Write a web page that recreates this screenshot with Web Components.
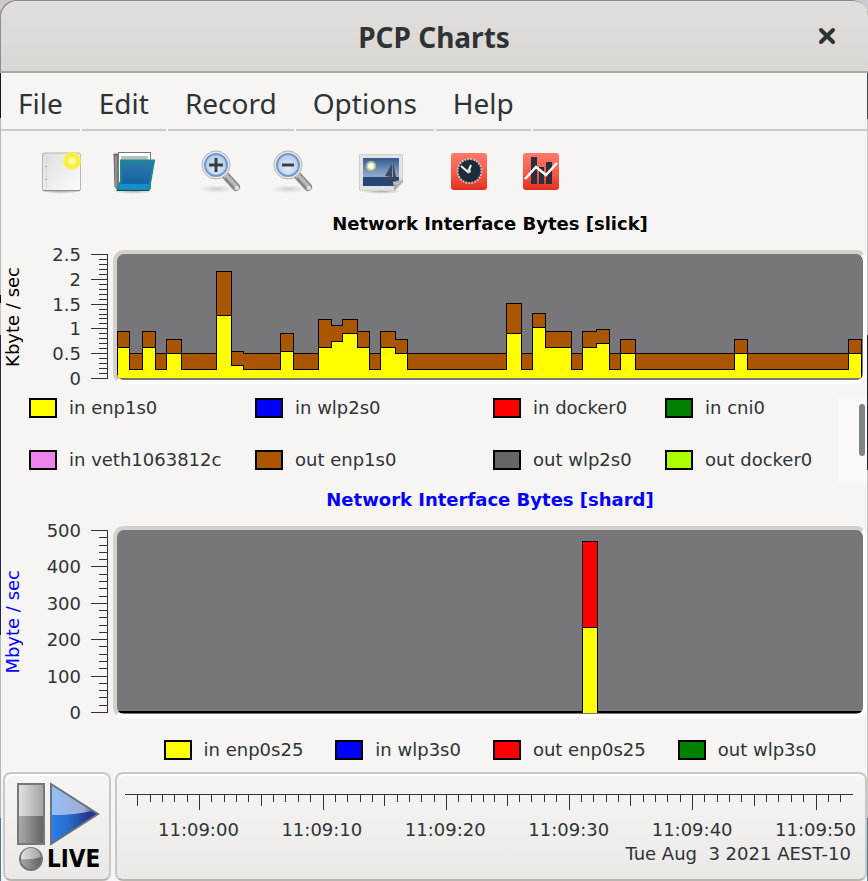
<!DOCTYPE html>
<html lang="en">
<head>
<meta charset="utf-8">
<title>PCP Charts</title>
<style>
  body {
    margin: 0;
    background: #f6f5f4;
    color: #2e3436;
    font: 18px/20px "DejaVu Sans", sans-serif;
  }
</style>
</head>
<body>
<pcp-window>
  <pcp-titlebar>PCP Charts</pcp-titlebar>
  <pcp-menubar items="File,Edit,Record,Options,Help"></pcp-menubar>
  <pcp-toolbar></pcp-toolbar>
  <pcp-chart id="slick" heading="Network Interface Bytes [slick]" unit="Kbyte / sec" labels="2.5,2,1.5,1,0.5,0">
    <pcp-legend slot="legend" scroll>
      <pcp-key color="#ffff00">in enp1s0</pcp-key>
      <pcp-key color="#0000ff">in wlp2s0</pcp-key>
      <pcp-key color="#ff0000">in docker0</pcp-key>
      <pcp-key color="#008000">in cni0</pcp-key>
      <pcp-key color="#ee82ee">in veth1063812c</pcp-key>
      <pcp-key color="#aa5500">out enp1s0</pcp-key>
      <pcp-key color="#666666">out wlp2s0</pcp-key>
      <pcp-key color="#aaff00">out docker0</pcp-key>
    </pcp-legend>
  </pcp-chart>
  <pcp-chart id="shard" active heading="Network Interface Bytes [shard]" unit="Mbyte / sec" labels="500,400,300,200,100,0">
    <pcp-legend slot="legend">
      <pcp-key color="#ffff00">in enp0s25</pcp-key>
      <pcp-key color="#0000ff">in wlp3s0</pcp-key>
      <pcp-key color="#ff0000">out enp0s25</pcp-key>
      <pcp-key color="#008000">out wlp3s0</pcp-key>
    </pcp-legend>
  </pcp-chart>
  <pcp-timebar></pcp-timebar>
</pcp-window>

<script>
// Window frame: slivers of the desktop show down both sides
class PcpWindow extends HTMLElement {
  constructor() {
    super();
    this.attachShadow({ mode: 'open' }).innerHTML = `
      <style>
        :host {
          display: block;
          box-sizing: border-box;
          min-height: 100vh;
          padding: 0 1px;
          background:
            linear-gradient(#15181a 118px, #b8b8b8 118px 295px, #000 295px 303px, #c4c4c4 303px 335px, #1f2b3d 335px 635px, #b5b5b5 635px 818px, #447aa8 818px) left / 1px 100% no-repeat,
            linear-gradient(#3d4c59 119px, #c4c4c4 119px 335px, #1f2937 335px 470px, #c4c4c4 470px 818px, #4f7d9c 818px) right / 1px 100% no-repeat,
            #f6f5f4;
        }
      </style>
      <slot></slot>`;
  }
}

class PcpTitlebar extends HTMLElement {
  constructor() {
    super();
    this.attachShadow({ mode: 'open' }).innerHTML = `
      <style>
        :host {
          display: grid;
          grid-template-columns: 1fr auto 1fr;
          align-items: center;
          height: 71px;
          margin: 0 -1px;
          border-bottom: 2px solid #aaa6a1;
          border-radius: 16px 16px 0 0;
          box-shadow: inset 1px 1px #8d8c8a, 0 -16px 0 16px #c9ccce;
          background: linear-gradient(#e2dedb, #dad6d2);
          font: bold 28px/36px "Noto Sans", sans-serif;
        }
        h1 { grid-column: 2; margin: 3px 0 0; font: inherit; }
        button {
          justify-self: end;
          width: 32px;
          height: 32px;
          margin-right: 25px;
          padding: 0;
          border: 0;
          background: none;
        }
        svg { display: block; margin: auto; }
      </style>
      <h1><slot></slot></h1>
      <button type="button" aria-label="Close">
        <svg width="18" height="18"><path d="M3 3l12 12M15 3L3 15" stroke="#2e3436" stroke-width="4" stroke-linecap="round"/></svg>
      </button>`;
  }
}

class PcpMenubar extends HTMLElement {
  connectedCallback() {
    const items = this.getAttribute('items').split(',');
    this.attachShadow({ mode: 'open' }).innerHTML = `
      <style>
        :host { display: block; }
        nav { display: flex; gap: 2px; height: 58px; }
        button, i { box-sizing: border-box; border: 0; border-bottom: 2px solid #cccac8; }
        button {
          padding: 4px 17px 0;
          background: none;
          color: inherit;
          font: 28px/36px "Noto Sans", sans-serif;
        }
        i { flex: 1; }
      </style>
      <nav>${items.map((t) => `<button type="button">${t}</button>`).join('')}<i></i></nav>`;
  }
}

const lens = (sign) => `
  <ellipse cx="20" cy="41" rx="18" ry="4" fill="url(#shade)" opacity=".5"/>
  <path d="M29 28l10 11" stroke="#8a8a88" stroke-width="8" stroke-linecap="round"/>
  <path d="M29 28l10 11" stroke="#b9b9b7" stroke-width="5" stroke-linecap="round"/>
  <path d="M28 30l9 10" stroke="#858583" stroke-width="2"/>
  <circle cx="40" cy="40" r="2" fill="#e8e8e6"/>
  <circle cx="19" cy="17" r="14" fill="#e9e9e6" stroke="#b2b4b0" stroke-width="1"/>
  <circle cx="19" cy="17" r="11" fill="url(#glass)" stroke="#7398cc" stroke-width="2"/>
  <path d="${sign}" stroke="#3c3f42" stroke-width="3"/>`;

const ICONS = {
  'New chart': `
    <ellipse cx="24" cy="43" rx="18" ry="3" fill="url(#shade)"/>
    <rect x="5.500" y="5" width="38" height="38" rx="2" fill="url(#paper)" stroke="#b5b5b3"/>
    <path d="M6 42.500h37" stroke="#8f8f8d"/>
    <path d="M9.500 7v34" stroke="#d6d6d4"/>
    <path d="M8 18.500h2M8 31.500h2" stroke="#aaa"/>
    <circle cx="35" cy="13" r="10" fill="url(#sun)"/>`,
  'Open view': `
    <ellipse cx="24" cy="43" rx="20" ry="3" fill="url(#shade)"/>
    <path d="M5 6h5v36l-4-3z" fill="#777" stroke="#666"/>
    <path d="M7 8v31" stroke="#aaa"/>
    <rect x="9.500" y="4.500" width="32" height="36" fill="#fff" stroke="#777"/>
    <rect x="12" y="8" width="27" height="16" fill="#bdbebf"/>
    <path d="M12 12.500h33l-5 29H8.500l3.500-9z" fill="url(#folder)" stroke="#178b91" stroke-width="2"/>
    <path d="M11.500 36h28.500l-1 5H9.500z" fill="#168fd0"/>
    <path d="M8 42.500h32" stroke="#0d5366"/>`,
  'Zoom in': lens('M12 17h14M19 10v14'),
  'Zoom out': lens('M13 17h12'),
  'Export image': `
    <ellipse cx="24" cy="43" rx="20" ry="3" fill="url(#shade)"/>
    <path d="M2.500 6.500h43v27l-8 9h-35z" fill="#e2e4e1" stroke="#ced0cd"/>
    <rect x="6" y="10" width="36" height="28" fill="url(#sky)"/>
    <path d="M6 26h36M6 22h36" stroke="#8098bd" opacity=".5"/>
    <rect x="6" y="29" width="36" height="9" fill="#284577"/>
    <path d="M28 28l7-12v13zM36 15l3 14h-3zM27 29h14l-3 3h-8z" fill="#3f4858"/>
    <circle cx="14" cy="18" r="5" fill="#dde6a4" opacity=".7"/>
    <circle cx="14" cy="18" r="3" fill="#fbfde0"/>
    <path d="M46 31v3l-9 9-1-9z" fill="#aaadaa"/>
    <path d="M46 31l-6 5-4-2" fill="none" stroke="#d8dad7"/>`,
  'Time control': `
    <rect x="6" y="5" width="36" height="37" rx="3" fill="url(#red)"/>
    <circle cx="24.500" cy="23" r="12" fill="#1e2b38" stroke="#c5c0bd" stroke-width="2" stroke-dasharray="2 1"/>
    <path d="M16 18l7 6 3-7" fill="none" stroke="#f3f3f3" stroke-width="2"/>
    <circle cx="24" cy="23" r="2" fill="#ddd"/>`,
  'Metric charts': `
    <rect x="6" y="5" width="36" height="37" rx="3" fill="url(#red)"/>
    <path d="M14 9h6v27h-6zM22 19h5v17h-5zM29 14h6v22h-6z" fill="#26303f"/>
    <path d="M8 31l11-12 10 8 11-12" fill="none" stroke="#fff" stroke-width="2.500"/>`,
};

const GRADIENTS = `
  <defs>
    <radialGradient id="shade"><stop stop-color="#777" stop-opacity=".6"/><stop offset="1" stop-color="#777" stop-opacity="0"/></radialGradient>
    <radialGradient id="glass" cx=".5" cy=".6"><stop stop-color="#e6f0fa"/><stop offset="1" stop-color="#b4cde9"/></radialGradient>
    <radialGradient id="sun"><stop stop-color="#fffff0"/><stop offset=".35" stop-color="#fbf86a"/><stop offset=".6" stop-color="#f9ec2e"/><stop offset=".8" stop-color="#faf04a" stop-opacity=".9"/><stop offset="1" stop-color="#fbf48c" stop-opacity="0"/></radialGradient>
    <linearGradient id="paper" x2="1" y2="1"><stop stop-color="#dedede"/><stop offset=".9" stop-color="#f9f9f9"/></linearGradient>
    <linearGradient id="folder" x2="0" y2="1"><stop stop-color="#2c7ba9"/><stop offset=".7" stop-color="#1767a5"/></linearGradient>
    <linearGradient id="sky" x2="0" y2="1"><stop stop-color="#35588f"/><stop offset=".6" stop-color="#8ea8cb"/></linearGradient>
    <linearGradient id="red" x2="0" y2="1"><stop stop-color="#ff7a6b"/><stop offset=".6" stop-color="#f65443"/><stop offset="1" stop-color="#e0301c"/></linearGradient>
  </defs>`;

class PcpToolbar extends HTMLElement {
  constructor() {
    super();
    const buttons = Object.entries(ICONS).map(([name, art]) =>
      `<button type="button" title="${name}"><svg width="48" height="48">${GRADIENTS}${art}</svg></button>`);
    this.attachShadow({ mode: 'open' }).innerHTML = `
      <style>
        :host { display: flex; height: 77px; padding-left: 24px; }
        button {
          width: 72px;
          padding: 5px 0 0;
          border: 0;
          background: none;
        }
        button:nth-of-type(3), button:nth-of-type(5), button:nth-of-type(6) { margin-left: 16px; }
        svg { display: block; margin: auto; }
      </style>
      ${buttons.join('')}`;
  }
}

// [right edge, total top, first metric top] in plot units, oldest sample first
const SLICK = [
  [12, 77, 93], [25, 99, 115], [38, 77, 93], [49, 99, 115], [64, 85, 99], [99, 99, 115],
  [114, 17, 61], [126, 97, 111], [163, 99, 115], [176, 79, 97], [201, 99, 115],
  [214, 65, 93], [225, 71, 87], [240, 65, 79], [252, 77, 93], [263, 99, 115],
  [278, 77, 93], [290, 85, 99], [389, 99, 115], [404, 49, 79], [415, 99, 115],
  [428, 59, 73], [454, 77, 93], [465, 99, 115], [479, 77, 93], [492, 75, 89],
  [503, 99, 115], [518, 85, 99], [617, 99, 115], [630, 85, 99], [731, 99, 115], [744, 85, 99],
];

const steps = (column) => {
  let d = 'M0.500 124';
  SLICK.forEach((s) => { d += `V${s[column] + 0.5}H${s[0] + 0.5}`; });
  return d + 'V124';
};

const PLOTS = {
  slick: {
    height: 126,
    art: `
      <path d="${steps(1)}" fill="#aa5500" stroke="#000"/>
      <path d="${steps(2)}" fill="#ffff00" stroke="#000"/>
      <path d="M0 121h744v3H0z" fill="#ffff00"/>
      <path d="M0 124h746v2H0z" fill="#77767b"/>`,
  },
  shard: {
    height: 184,
    art: `
      <path d="M0 182h746" stroke="#000" stroke-width="2"/>
      <path d="M465.500 97.500v-86h15v86z" fill="#ff0000" stroke="#000"/>
      <path d="M465.500 182v-84.500h15V182z" fill="#ffff00" stroke="#000"/>
      <path d="M466 181h14v2h-14z" fill="#ffff00"/>`,
  },
};

class PcpChart extends HTMLElement {
  connectedCallback() {
    const { height, art } = PLOTS[this.id];
    const labels = this.getAttribute('labels').split(',');
    const span = height - 2;
    let ticks = `M16.500 0V${span + 1}`;
    for (let i = 0; i <= 25; i++) {
      ticks += `M${i % 5 ? 8 : 0} ${Math.round(i * span / 25) + 0.5}H16`;
    }
    this.attachShadow({ mode: 'open' }).innerHTML = `
      <style>
        :host { display: block; --ink: #000; }
        :host([active]) { --ink: #0000ff; }
        .body {
          display: grid;
          grid-template-columns: 24px 56px 17px minmax(0, 1fr);
        }
        h2 {
          grid-column: 4;
          margin: 0 0 10px 15px;
          color: var(--ink);
          font: bold 18px/32px "DejaVu Sans", sans-serif;
          text-align: center;
        }
        .unit {
          grid-column: 1;
          justify-self: center;
          align-self: center;
          writing-mode: vertical-rl;
          transform: rotate(180deg);
          color: var(--ink);
          white-space: nowrap;
          margin-block: -10px;
        }
        .labels {
          display: flex;
          flex-direction: column;
          justify-content: space-between;
          text-align: right;
          margin: -5px 0 -5px;
        }
        .scale { margin: 4px 0 0 10px; width: 17px; overflow: visible; }
        .frame {
          margin-left: 15px;
          border: 4px solid;
          border-color: #d5d0cc #fff #fff #d5d0cc;
          border-radius: 11px;
          background: #77767b;
          overflow: hidden;
        }
        .frame svg { display: block; width: 100%; }
        path { vector-effect: non-scaling-stroke; }
      </style>
      <div class="body">
        <h2>${this.getAttribute('heading')}</h2>
        <div class="unit">${this.getAttribute('unit')}</div>
        <div class="labels">${labels.map((t) => `<span>${t}</span>`).join('')}</div>
        <svg class="scale" height="${height}"><path d="${ticks}" fill="none" stroke="#2e3436"/></svg>
        <div class="frame">
          <svg height="${height}" viewBox="0 0 746 ${height}" preserveAspectRatio="none" shape-rendering="crispEdges">${art}</svg>
        </div>
      </div>
      <slot name="legend"></slot>`;
  }
}

class PcpLegend extends HTMLElement {
  constructor() {
    super();
    this.attachShadow({ mode: 'open' }).innerHTML = `
      <style>
        :host { display: flex; }
        .keys {
          flex: 1;
          display: flex;
          justify-content: center;
          gap: 32px;
          padding: 22px 0 12px 112px;
        }
        .bar { display: none; }
        :host([scroll]) .keys {
          display: grid;
          grid-template-columns: 226fr 238fr 172fr 174fr;
          gap: 32px 0;
          padding: 14px 0 14px 28px;
        }
        :host([scroll]) .bar {
          display: block;
          box-sizing: border-box;
          width: 28px;
          height: 88px;
          margin-top: 12px;
          padding: 8px 2px 0 20px;
          background: #faf9f8;
        }
        .bar i { display: block; height: 52px; border-radius: 3px; background: #7f8384; }
      </style>
      <div class="keys"><slot></slot></div>
      <div class="bar"><i></i></div>`;
  }
}

class PcpKey extends HTMLElement {
  connectedCallback() {
    this.attachShadow({ mode: 'open' }).innerHTML = `
      <style>
        :host { display: flex; gap: 12px; white-space: nowrap; }
        i {
          box-sizing: border-box;
          width: 28px;
          height: 20px;
          border: 2px solid #000;
          background: ${this.getAttribute('color')};
        }
      </style>
      <i></i><span><slot></slot></span>`;
  }
}

class PcpTimebar extends HTMLElement {
  constructor() {
    super();
    // one tick a second, longer every five and ten
    let ticks = 'M0 0.500H729';
    for (let s = -5; s <= 53; s++) {
      const x = Math.round(74 + s * 12.35) + 0.5;
      const length = s % 10 === 0 ? 16 : s % 5 === 0 ? 12 : 8;
      ticks += `M${x} 0v${length}`;
    }
    const times = ['00', '10', '20', '30', '40', '50'];
    this.attachShadow({ mode: 'open' }).innerHTML = `
      <style>
        :host { display: flex; gap: 4px; padding: 0 0 0 2px; }
        button, .panel {
          box-sizing: border-box;
          height: 109px;
          border: 2px solid #cdc7c2;
          border-bottom-color: #bbb5af;
          border-radius: 8px;
          background: linear-gradient(#f6f5f4, #eae9e8);
          box-shadow: inset 0 2px #fff;
        }
        button {
          width: 108px;
          padding: 0 0 0 11px;
          color: #000;
          font: bold 24px/26px "DejaVu Sans Condensed", "DejaVu Sans", sans-serif;
          text-align: left;
        }
        button svg { display: block; }
        button span { display: flex; align-items: center; gap: 3px; }
        .panel { flex: 1; min-width: 0; padding: 20px 12px 0 8px; }
        .panel svg { display: block; width: 100%; }
        .times { display: flex; justify-content: space-between; margin: 9px -3px 4px 33px; }
        time { display: block; text-align: right; white-space: pre; margin-right: 2px; }
        path { vector-effect: non-scaling-stroke; }
      </style>
      <button type="button" aria-label="LIVE">
        <svg width="86" height="64">
          <defs>
            <linearGradient id="steel"><stop stop-color="#e2e2e2"/><stop offset="1" stop-color="#a2a2a2"/></linearGradient>
            <linearGradient id="iron"><stop stop-color="#acacac"/><stop offset="1" stop-color="#606060"/></linearGradient>
            <linearGradient id="pale"><stop stop-color="#93bff8"/><stop offset=".7" stop-color="#a0add0"/><stop offset="1" stop-color="#40438a"/></linearGradient>
            <linearGradient id="deep"><stop stop-color="#2b7eea"/><stop offset=".35" stop-color="#266fcf"/><stop offset=".8" stop-color="#26388b"/></linearGradient>
          </defs>
          <rect x="2" y="2" width="26" height="32" fill="url(#steel)"/>
          <rect x="2" y="34" width="26" height="28" fill="url(#iron)"/>
          <rect x="2" y="2" width="26" height="60" fill="none" stroke="#777" stroke-width="2"/>
          <path d="M35 2l47 30H72L35 33z" fill="url(#pale)"/>
          <path d="M35 33q25 0 40-4l7 3-47 30z" fill="url(#deep)"/>
          <path d="M35 2l47 30-47 30z" fill="none" stroke="#68707c" stroke-width="2"/>
        </svg>
        <span>
          <svg width="28" height="26">
            <circle cx="15" cy="13" r="11" fill="url(#iron)" stroke="#777" stroke-width="2"/>
            <path d="M5 13a10 10 0 0 1 20-2q-9 3-20 2z" fill="url(#steel)"/>
          </svg>LIVE
        </span>
      </button>
      <div class="panel">
        <svg height="17" viewBox="0 0 729 17" preserveAspectRatio="none" shape-rendering="crispEdges"><path d="${ticks}" stroke="#2e3436"/></svg>
        <div class="times">${times.map((t) => `<span>11:09:${t}</span>`).join('')}</div>
        <time datetime="2021-08-03">Tue Aug  3 2021 AEST-10</time>
      </div>`;
  }
}

customElements.define('pcp-window', PcpWindow);
customElements.define('pcp-titlebar', PcpTitlebar);
customElements.define('pcp-menubar', PcpMenubar);
customElements.define('pcp-toolbar', PcpToolbar);
customElements.define('pcp-chart', PcpChart);
customElements.define('pcp-legend', PcpLegend);
customElements.define('pcp-key', PcpKey);
customElements.define('pcp-timebar', PcpTimebar);
</script>
</body>
</html>
